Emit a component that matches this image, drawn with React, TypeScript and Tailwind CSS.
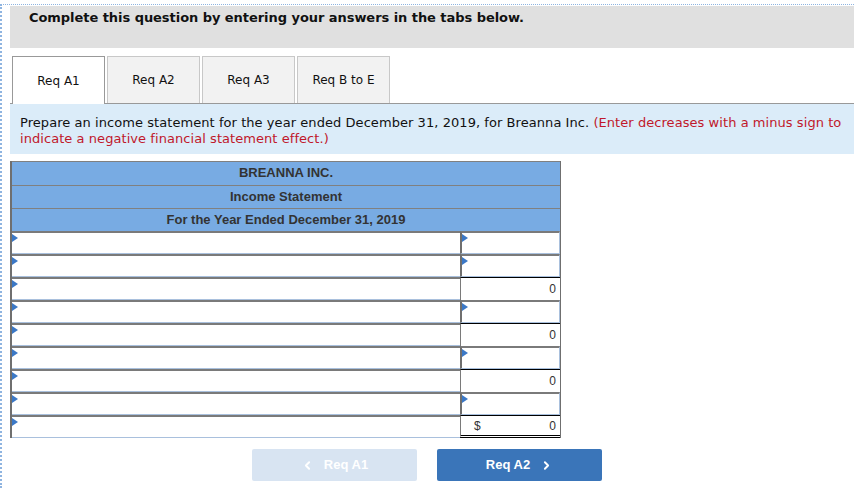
import { ChevronLeft, ChevronRight } from 'lucide-react';

type Row = { kind: 'input' } | { kind: 'total'; value: string; dollar?: boolean };

const rows: Row[] = [
  { kind: 'input' },
  { kind: 'input' },
  { kind: 'total', value: '0' },
  { kind: 'input' },
  { kind: 'total', value: '0' },
  { kind: 'input' },
  { kind: 'total', value: '0' },
  { kind: 'input' },
  { kind: 'total', value: '0', dollar: true },
];

const tabs = ['Req A1', 'Req A2', 'Req A3', 'Req B to E'];

function Marker() {
  return (
    <span className="absolute left-0 top-[1px] h-0 w-0 border-y-[4px] border-l-[6px] border-y-transparent border-l-[#3b78c6]" />
  );
}

function InputCell({ className = '' }: { className?: string }) {
  return (
    <div className={`relative h-full bg-white border-t-2 border-t-[#7a7a7a] border-b border-b-[#a9c0dd] ${className}`}>
      <Marker />
    </div>
  );
}

export default function App() {
  return (
    <div className="min-h-screen bg-white font-['DejaVu_Sans',Verdana,sans-serif] text-[#111]">
      <div className="mt-[4px] min-h-[484px] border-l-2 border-t border-dotted border-[#8fb4e0] pl-[8px]">
        {/* Header */}
        <div className="mt-[1px] h-[42px] bg-[#e0e0e0] pl-[19px] pt-[3px] text-[13px] font-bold leading-[18px] tracking-[-0.05px]">
          Complete this question by entering your answers in the tabs below.
        </div>

        {/* Tabs */}
        <div className="flex h-[56px] items-end border-b border-[#999] pl-[2px]">
          {tabs.map((tab, i) => (
            <div
              key={tab}
              className={`mr-[2px] flex h-[47px] w-[93px] items-center justify-center text-[12px] ${
                i === 0
                  ? '-mb-px h-[48px] border border-b-0 border-[#999] bg-white'
                  : 'border border-b-0 border-[#c8c8c8] bg-[#f2f2f2]'
              }`}
            >
              {tab}
            </div>
          ))}
        </div>

        {/* Instructions */}
        <div className="h-[50px] bg-[#dbecf9] pl-[10px] pt-[11px] text-[13px] leading-[16px] tracking-[0.06px]">
          Prepare an income statement for the year ended December 31, 2019, for Breanna Inc.{' '}
          <span className="text-[#c0182b]">(Enter decreases with a minus sign to indicate a negative financial statement effect.)</span>
        </div>

        {/* Statement */}
        <div className="mt-[7px] w-[551px] border-l-2 border-r border-[#6f6f6f] font-['Liberation_Sans',Arial,sans-serif]">
          <div className="border-t border-[#808080] bg-[#78abe3] text-center text-[13px] font-bold text-[#333]">
            <div className="h-[23px] leading-[22px]">BREANNA INC.</div>
            <div className="h-[23px] border-t border-[#808080] leading-[22px]">Income Statement</div>
            <div className="h-[23px] border-t border-[#808080] leading-[22px]">For the Year Ended December 31, 2019</div>
          </div>
          {rows.map((row, i) => (
            <div key={i} className="grid h-[23px] grid-cols-[448px_1fr]">
              <InputCell />
              {row.kind === 'input' ? (
                <InputCell className="border-l-2 border-l-[#6f6f6f] border-r border-r-[#a9c0dd]" />
              ) : (
                <div
                  className={`flex h-full items-center justify-between border-l border-l-[#7a7a7a] border-t border-t-black bg-white pl-[13px] pr-[4px] text-[12px] text-[#333] ${
                    row.dollar ? 'border-b-[3px] border-double border-b-black' : ''
                  }`}
                >
                  <span>{row.dollar ? '$' : ''}</span>
                  <span>{row.value}</span>
                </div>
              )}
            </div>
          ))}
        </div>

        {/* Navigation */}
        <div className="mt-[11px] flex justify-center gap-[20px] pr-[10px] font-['Liberation_Sans',Arial,sans-serif] text-[13px] font-bold text-white">
          <button className="flex h-[32px] w-[165px] items-center justify-center gap-[10px] rounded-[2px] bg-[#d8e4f2]">
            <ChevronLeft size={13} strokeWidth={3.5} />
            Req A1
          </button>
          <button className="flex h-[32px] w-[165px] items-center justify-center gap-[10px] rounded-[2px] bg-[#3a75b9]">
            Req A2
            <ChevronRight size={13} strokeWidth={3.5} />
          </button>
        </div>
      </div>
    </div>
  );
}
